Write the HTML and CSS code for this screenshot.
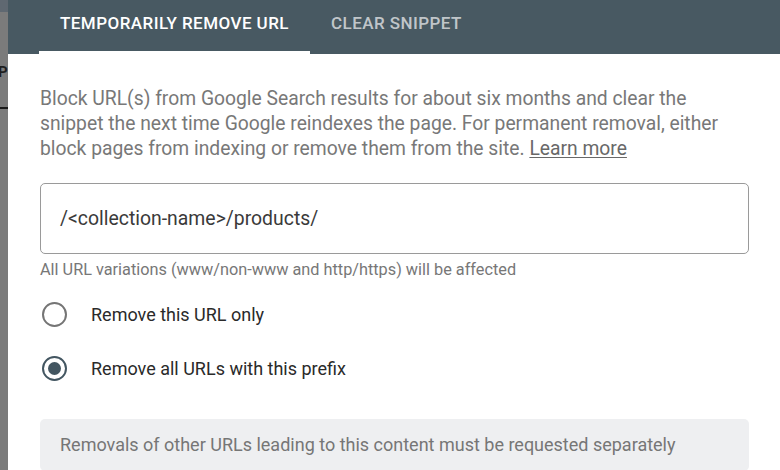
FILE: index.html
```html
<!DOCTYPE html>
<html lang="en">
<head>
<meta charset="utf-8">
<title>Removals</title>
<link rel="stylesheet" href="styles.css">
</head>
<body>
<div class="page">
  <div class="backdrop">
    <div class="backdrop-top"></div>
    <div class="backdrop-letter">P</div>
    <div class="backdrop-rule"></div>
  </div>
  <div class="dialog">
    <div class="tabs">
      <div class="tab tab-active">TEMPORARILY REMOVE URL</div>
      <div class="tab">CLEAR SNIPPET</div>
    </div>
    <div class="content">
      <p class="intro">Block URL(s) from Google Search results for about six months and clear the snippet the next time Google reindexes the page. For permanent removal, either block pages from indexing or remove them from the site. <a class="learn" href="#">Learn more</a></p>
      <div class="field">/&lt;collection-name&gt;/products/</div>
      <div class="helper">All URL variations (www/non-www and http/https) will be affected</div>
      <div class="radios">
        <div class="radio-row">
          <span class="radio"></span>
          <span class="radio-label">Remove this URL only</span>
        </div>
        <div class="radio-row">
          <span class="radio radio-on"><span class="radio-dot"></span></span>
          <span class="radio-label">Remove all URLs with this prefix</span>
        </div>
      </div>
      <div class="note">Removals of other URLs leading to this content must be requested separately</div>
    </div>
  </div>
</div>
</body>
</html>
```
FILE: styles.css
```css
* { box-sizing: border-box; }
html, body { margin: 0; padding: 0; }
body {
  width: 780px;
  height: 470px;
  overflow: hidden;
  font-family: Roboto, "Liberation Sans", Arial, sans-serif;
  background: #ffffff;
}
.page {
  display: flex;
  height: 470px;
}
.backdrop {
  width: 8px;
  flex: none;
  background: #7b7b7b;
  display: flex;
  flex-direction: column;
  overflow: hidden;
}
.backdrop-top {
  height: 12px;
  background: #5f6871;
}
.backdrop-letter {
  margin-top: 52px;
  height: 16px;
  font-size: 15px;
  font-weight: 700;
  line-height: 16px;
  color: #1e1e1e;
  margin-left: -2px;
}
.backdrop-rule {
  margin-top: 27px;
  height: 2px;
  background: #1a1a1a;
}
.dialog {
  flex: 1;
  display: flex;
  flex-direction: column;
  background: #ffffff;
}
.tabs {
  height: 54px;
  flex: none;
  background: #485962;
  display: flex;
  padding-left: 31px;
}
.tab {
  padding: 13px 21px 0;
  font-size: 17px;
  font-weight: 500;
  letter-spacing: 0.45px;
  color: rgba(255, 255, 255, 0.68);
  line-height: 20px;
}
.tab-active {
  color: #ffffff;
  border-bottom: 3px solid #ffffff;
}
.content {
  padding: 32px 31px 0 32px;
}
.intro {
  margin: 0;
  font-size: 19.3px;
  line-height: 25px;
  color: #787878;
}
.learn {
  color: #686868;
  text-decoration: underline;
  text-underline-offset: 2px;
}
.field {
  margin-top: 22px;
  height: 71px;
  border: 1px solid #9a9a9a;
  border-radius: 5px;
  padding: 0 19px;
  display: flex;
  align-items: center;
  font-size: 19.4px;
  color: #3a3a3a;
}
.helper {
  margin-top: 6px;
  font-size: 16.3px;
  line-height: 20px;
  color: #777777;
}
.radios {
  margin-top: 22px;
  display: flex;
  flex-direction: column;
  gap: 28.5px;
}
.radio-row {
  display: flex;
  align-items: center;
  height: 25px;
}
.radio {
  width: 25px;
  height: 25px;
  margin-left: 2px;
  border: 2.5px solid #757575;
  border-radius: 50%;
  display: flex;
  align-items: center;
  justify-content: center;
}
.radio-on {
  border-color: #435661;
}
.radio-dot {
  width: 13px;
  height: 13px;
  border-radius: 50%;
  background: #435661;
}
.radio-label {
  margin-left: 24px;
  font-size: 18px;
  color: #2a2a2a;
}
.note {
  margin-top: 38px;
  height: 52px;
  background: #eeeff1;
  border-radius: 5px;
  padding: 0 20px;
  display: flex;
  align-items: center;
  font-size: 18px;
  color: #767676;
}
```
